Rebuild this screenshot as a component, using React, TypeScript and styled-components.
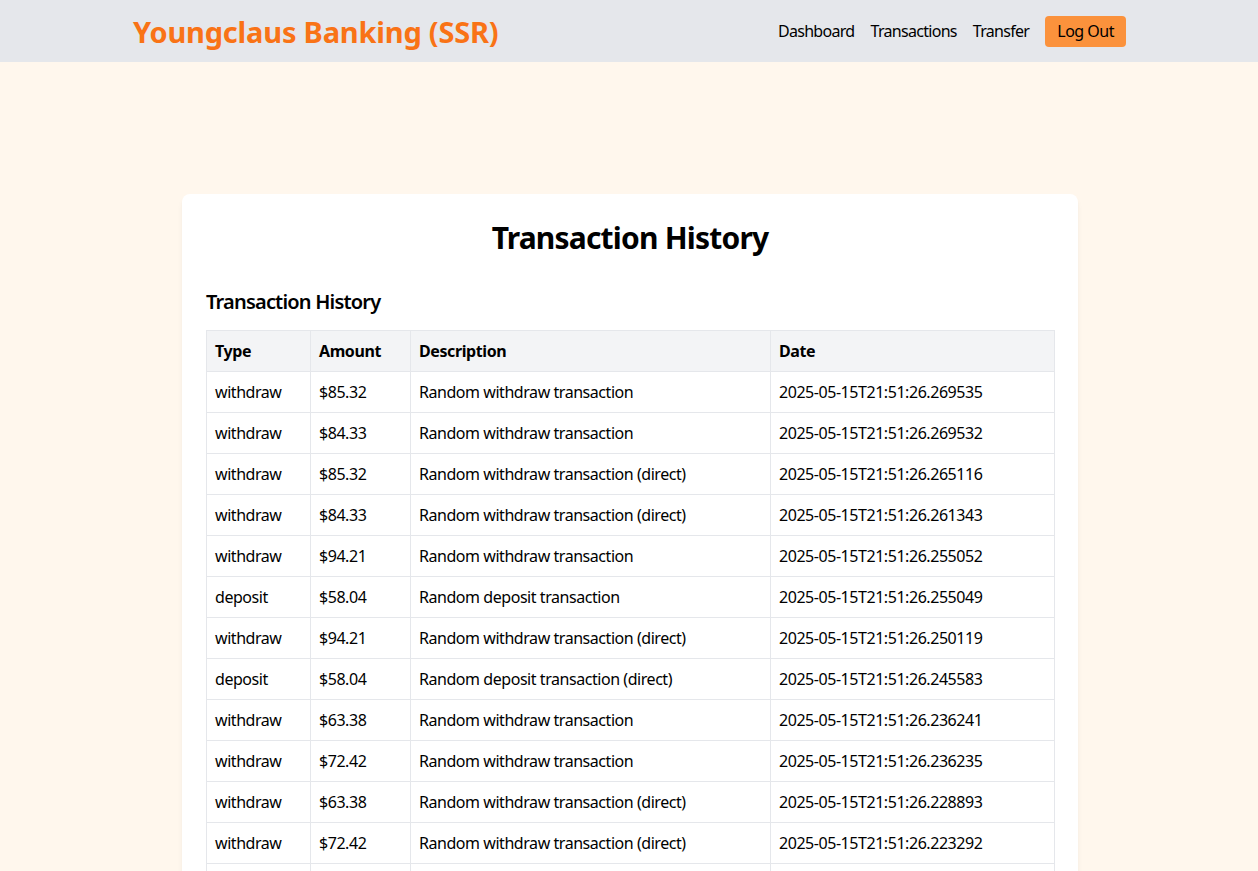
import React from 'react';
import styled, { createGlobalStyle } from 'styled-components';

type Txn = {
  type: string;
  amount: string;
  description: string;
  date: string;
};

const transactions: Txn[] = [
  { type: 'withdraw', amount: '$85.32', description: 'Random withdraw transaction', date: '2025-05-15T21:51:26.269535' },
  { type: 'withdraw', amount: '$84.33', description: 'Random withdraw transaction', date: '2025-05-15T21:51:26.269532' },
  { type: 'withdraw', amount: '$85.32', description: 'Random withdraw transaction (direct)', date: '2025-05-15T21:51:26.265116' },
  { type: 'withdraw', amount: '$84.33', description: 'Random withdraw transaction (direct)', date: '2025-05-15T21:51:26.261343' },
  { type: 'withdraw', amount: '$94.21', description: 'Random withdraw transaction', date: '2025-05-15T21:51:26.255052' },
  { type: 'deposit', amount: '$58.04', description: 'Random deposit transaction', date: '2025-05-15T21:51:26.255049' },
  { type: 'withdraw', amount: '$94.21', description: 'Random withdraw transaction (direct)', date: '2025-05-15T21:51:26.250119' },
  { type: 'deposit', amount: '$58.04', description: 'Random deposit transaction (direct)', date: '2025-05-15T21:51:26.245583' },
  { type: 'withdraw', amount: '$63.38', description: 'Random withdraw transaction', date: '2025-05-15T21:51:26.236241' },
  { type: 'withdraw', amount: '$72.42', description: 'Random withdraw transaction', date: '2025-05-15T21:51:26.236235' },
  { type: 'withdraw', amount: '$63.38', description: 'Random withdraw transaction (direct)', date: '2025-05-15T21:51:26.228893' },
  { type: 'withdraw', amount: '$72.42', description: 'Random withdraw transaction (direct)', date: '2025-05-15T21:51:26.223292' },
  { type: 'deposit', amount: '$41.17', description: 'Random deposit transaction', date: '2025-05-15T21:51:26.218804' },
  { type: 'deposit', amount: '$41.17', description: 'Random deposit transaction (direct)', date: '2025-05-15T21:51:26.212460' },
];

const columns = [
  { label: 'Type', width: 104 },
  { label: 'Amount', width: 100 },
  { label: 'Description', width: 360 },
  { label: 'Date', width: 284 },
];

function App(): JSX.Element {
  return (
    <>
      <GlobalStyle />
      <Header>
        <HeaderInner>
          <Brand>Youngclaus Banking (SSR)</Brand>
          <Nav>
            <NavLink href="#">Dashboard</NavLink>
            <NavLink href="#">Transactions</NavLink>
            <NavLink href="#">Transfer</NavLink>
            <LogOutButton type="button">Log Out</LogOutButton>
          </Nav>
        </HeaderInner>
      </Header>
      <Main>
        <Card>
          <PageTitle>Transaction History</PageTitle>
          <SectionTitle>Transaction History</SectionTitle>
          <Table>
            <colgroup>
              {columns.map((c) => (
                <col key={c.label} style={{ width: c.width }} />
              ))}
            </colgroup>
            <thead>
              <tr>
                {columns.map((c) => (
                  <HeadCell key={c.label}>{c.label}</HeadCell>
                ))}
              </tr>
            </thead>
            <tbody>
              {transactions.map((t, i) => (
                <tr key={i}>
                  <Cell>{t.type}</Cell>
                  <Cell>{t.amount}</Cell>
                  <Cell>{t.description}</Cell>
                  <Cell>{t.date}</Cell>
                </tr>
              ))}
            </tbody>
          </Table>
        </Card>
      </Main>
    </>
  );
}

export default App;

const GlobalStyle = createGlobalStyle`
  * {
    box-sizing: border-box;
  }

  body {
    margin: 0;
    background-color: #fff7ed;
    color: #000;
    font-family: 'Noto Sans', 'Open Sans', sans-serif;
  }
`;

const Header = styled.header`
  background-color: #e5e7eb;
  height: 62px;
`;

const HeaderInner = styled.div`
  max-width: 1024px;
  height: 100%;
  margin: 0 auto;
  padding: 0 15px 0 16px;
  display: flex;
  align-items: center;
  justify-content: space-between;
`;

const Brand = styled.h1`
  margin: 0;
  font-size: 29px;
  font-weight: 700;
  color: #f97316;
  letter-spacing: -0.2px;
`;

const Nav = styled.nav`
  display: flex;
  align-items: center;
  gap: 16px;
`;

const NavLink = styled.a`
  color: #000;
  text-decoration: none;
  font-size: 16px;
  letter-spacing: -0.7px;
`;

const LogOutButton = styled.button`
  background-color: #fb923c;
  border: none;
  border-radius: 4px;
  height: 31px;
  padding: 0 12px;
  font-family: inherit;
  font-size: 16px;
  letter-spacing: -0.5px;
  color: #000;
  cursor: pointer;
`;

const Main = styled.main`
  padding: 132px 16px 40px;
  display: flex;
  justify-content: center;
`;

const Card = styled.section`
  width: 896px;
  margin-left: 2px;
  background-color: #fff;
  border-radius: 8px;
  padding: 24px;
  box-shadow: 0 4px 6px -1px rgba(0, 0, 0, 0.06), 0 2px 4px -2px rgba(0, 0, 0, 0.05);
`;

const PageTitle = styled.h2`
  margin: 0 0 30px;
  text-align: center;
  font-size: 30px;
  line-height: 40px;
  font-weight: 700;
  letter-spacing: -0.8px;
`;

const SectionTitle = styled.h3`
  margin: 0 0 14px;
  font-size: 20px;
  line-height: 28px;
  font-weight: 600;
  letter-spacing: -0.8px;
`;

const Table = styled.table`
  width: 100%;
  border-collapse: collapse;
  table-layout: fixed;
  font-size: 16px;
`;

const HeadCell = styled.th`
  background-color: #f3f4f6;
  border: 1px solid #e5e7eb;
  padding: 8px;
  height: 41px;
  text-align: left;
  font-weight: 700;
  letter-spacing: -0.4px;
`;

const Cell = styled.td`
  border: 1px solid #e5e7eb;
  padding: 8px;
  height: 41px;
  letter-spacing: -0.45px;
  white-space: nowrap;
`;
